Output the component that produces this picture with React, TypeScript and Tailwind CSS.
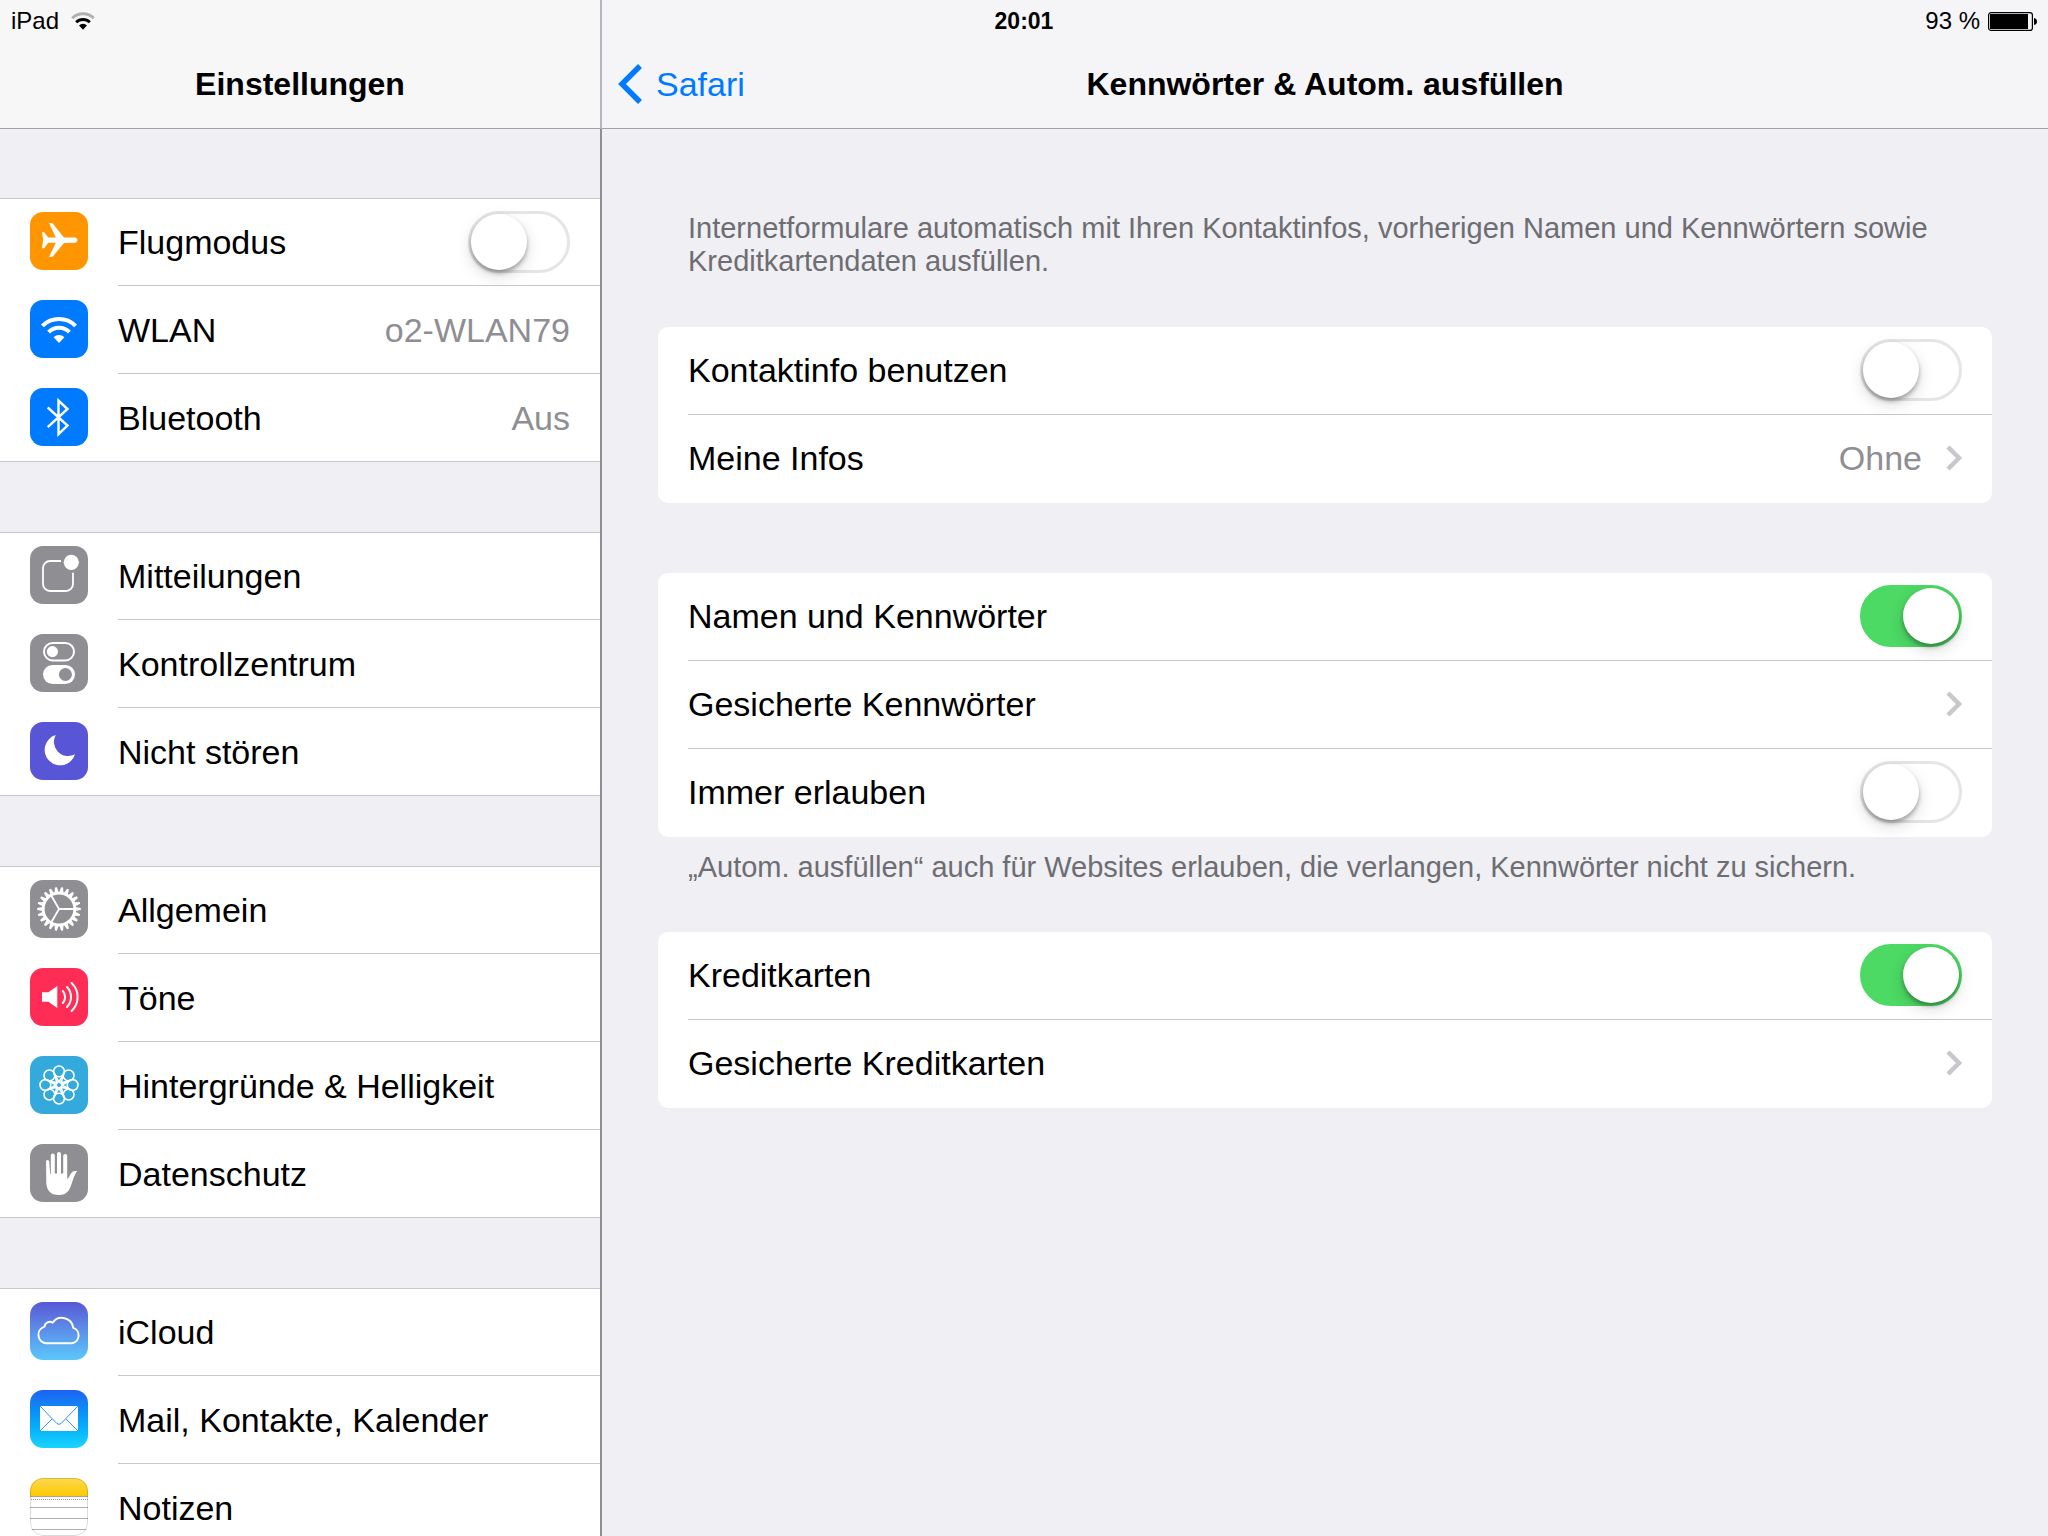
import type { ReactNode } from "react";

type SidebarItem = {
  label: string;
  icon: ReactNode;
  tile: string;
  value?: string;
  toggle?: boolean;
};

const gearTeeth = Array.from({ length: 22 }, (_, i) => (i * 360) / 22);
const petals = [0, 45, 90, 135, 180, 225, 270, 315];

const icons = {
  airplane: (
    <path
      fill="#fff"
      d="M12 20.3h2.2l4 5.2h7.600L19 11h3.400L34 25.400l11.700.1a2.900 2.900 0 0 1 0 5.300L34 30.900 22.400 45H19l6.800-14.200h-7.600L14.200 36.300H12l1.200-8.200z"
    />
  ),
  wifi: (
    <>
      <g fill="none" stroke="#fff" strokeWidth="4">
        <path d="M12.4 25.9a23.5 23.5 0 0 1 33.2 0" />
        <path d="M18.6 32.1a14.7 14.7 0 0 1 20.8 0" />
      </g>
      <path fill="#fff" d="M29 42.9l-5.400-5.600a7.600 7.600 0 0 1 10.800 0z" />
    </>
  ),
  bluetooth: (
    <path
      fill="none"
      stroke="#fff"
      strokeWidth="2.4"
      d="M17.700 19.500L37.500 37.500 28.500 46.200V12.600L37.500 21 17.700 39.200"
    />
  ),
  notifications: (
    <>
      <path
        fill="none"
        stroke="#fff"
        strokeWidth="1.8"
        d="M31 15H20a7 7 0 0 0-7 7v16a7 7 0 0 0 7 7h16a7 7 0 0 0 7-7V26.7"
      />
      <circle cx="41.3" cy="16.3" r="7.6" fill="#fff" />
    </>
  ),
  controls: (
    <>
      <rect x="14" y="9" width="30" height="17.4" rx="8.7" fill="none" stroke="#fff" strokeWidth="2" />
      <circle cx="22.4" cy="17.6" r="5.6" fill="#fff" />
      <rect x="13" y="31" width="32" height="19" rx="9.5" fill="#fff" />
      <circle cx="35.4" cy="40.5" r="6.5" fill="#8e8e93" />
    </>
  ),
  moon: (
    <path
      fill="#fff"
      d="M25.7 13A15.5 15.5 0 1 0 45 32.3 14.2 14.2 0 0 1 25.7 13z"
    />
  ),
  gear: (
    <>
      {gearTeeth.map((angle) => (
        <path
          key={angle}
          fill="#fff"
          d="M45.500 26.900l5.300 1.100v2l-5.300 1.100z"
          transform={`rotate(${angle} 29 29)`}
        />
      ))}
      <circle cx="29" cy="29" r="15.800" fill="none" stroke="#fff" strokeWidth="2.800" />
      <path
        fill="none"
        stroke="#fff"
        strokeWidth="1.8"
        d="M29 29h15M29 29l-7.5-13M29 29l-7.5 13"
      />
    </>
  ),
  sound: (
    <>
      <path fill="#fff" d="M12 24.2h6.4L27.3 18v22l-8.9-6.2H12z" />
      <g fill="none" stroke="#fff" strokeWidth="2" strokeLinecap="round">
        <path d="M32.8 23a9 9 0 0 1 0 12" />
        <path d="M37 19a14.5 14.5 0 0 1 0 20" />
        <path d="M41.6 15a19.3 19.3 0 0 1 0 28" />
      </g>
    </>
  ),
  flower: (
    <g fill="none" stroke="#fff" strokeWidth="1.6">
      {petals.map((angle) => (
        <g key={angle} transform={`rotate(${angle} 29 29)`}>
          <circle cx="29" cy="15.400" r="5.400" />
          <path d="M24 17.500l5 8.500 5-8.500" />
        </g>
      ))}
      <circle cx="29" cy="29" r="3.200" />
    </g>
  ),
  hand: (
    <path
      fill="#fff"
      d="M16 17.5a1.6 1.6 0 0 1 3.2 0l1 12.5h.6V11.6a2 2 0 0 1 4 0V29.5h2.2V10a2 2 0 0 1 4 0v19.5h2.2V12.1a2 2 0 0 1 4 0V35c1.4-1 2.3-3 3.4-5 1.3-2.4 3.6-3.6 6.6-2.9-2.4 3.2-3.6 7-5.2 11.3C40 45.6 37 51 29 51c-8.5 0-12.3-4.5-12.7-12z"
    />
  ),
  cloud: (
    <path
      fill="none"
      stroke="#fff"
      strokeWidth="2"
      strokeLinejoin="round"
      d="M16 41.2a8.5 8.5 0 0 1-1.5-16.6 5.4 5.4 0 0 1 8.2-4 11.4 11.4 0 0 1 20.500 5.300A7.900 7.900 0 0 1 42 41.200z"
    />
  ),
  mail: (
    <>
      <path fill="#fff" d="M10 16h38v25H10z" />
      <path
        fill="none"
        stroke="#2b93f7"
        strokeWidth="1"
        d="M10 16l16.800 17.400q2.200 2 4.400 0L48 16M10 41l12-12M48 41L36 29"
      />
    </>
  ),
  notes: (
    <>
      <defs>
        <linearGradient id="notes-top" x1="0" y1="0" x2="0" y2="1">
          <stop offset="0" stopColor="#fed94f" />
          <stop offset="1" stopColor="#fdc905" />
        </linearGradient>
      </defs>
      <path fill="url(#notes-top)" d="M0 0h58v18H0z" />
      <path stroke="#a9a594" strokeWidth="1" d="M0 18.5h58" />
      <path stroke="#9a9a9a" strokeWidth="1" strokeDasharray="1 1" d="M1 21.5h57" />
      <path stroke="#b0b0b0" strokeWidth="1" d="M0 29.5h58M0 40.5h58M0 51.5h58" />
      <rect x=".5" y=".5" width="57" height="57" rx="12.5" fill="none" stroke="#000" strokeOpacity=".14" />
    </>
  ),
};

const sidebarGroups: SidebarItem[][] = [
  [
    { label: "Flugmodus", icon: icons.airplane, tile: "bg-[#ff9500]", toggle: true },
    { label: "WLAN", icon: icons.wifi, tile: "bg-[#007aff]", value: "o2-WLAN79" },
    { label: "Bluetooth", icon: icons.bluetooth, tile: "bg-[#007aff]", value: "Aus" },
  ],
  [
    { label: "Mitteilungen", icon: icons.notifications, tile: "bg-[#8e8e93]" },
    { label: "Kontrollzentrum", icon: icons.controls, tile: "bg-[#8e8e93]" },
    { label: "Nicht stören", icon: icons.moon, tile: "bg-[#5856d6]" },
  ],
  [
    { label: "Allgemein", icon: icons.gear, tile: "bg-[#8e8e93]" },
    { label: "Töne", icon: icons.sound, tile: "bg-[#ff2d55]" },
    { label: "Hintergründe & Helligkeit", icon: icons.flower, tile: "bg-[#34aadc]" },
    { label: "Datenschutz", icon: icons.hand, tile: "bg-[#8e8e93]" },
  ],
  [
    { label: "iCloud", icon: icons.cloud, tile: "bg-linear-to-b from-[#5856d6] to-[#5ac8fa]" },
    { label: "Mail, Kontakte, Kalender", icon: icons.mail, tile: "bg-linear-to-b from-[#1d62f0] to-[#19d5fd]" },
    { label: "Notizen", icon: icons.notes, tile: "bg-white" },
  ],
];

function Toggle({ defaultChecked = false }: { defaultChecked?: boolean }) {
  return (
    <input
      type="checkbox"
      role="switch"
      defaultChecked={defaultChecked}
      className="h-[62px] w-[102px] shrink-0 appearance-none rounded-full border-3 border-[#e5e5e5] bg-white before:block before:size-14 before:rounded-full before:bg-white before:shadow-[0_3px_4px_rgba(0,0,0,0.3),0_6px_16px_rgba(0,0,0,0.15)] checked:border-[#4cd964] checked:bg-[#4cd964] checked:before:ml-10"
    />
  );
}

function Chevron() {
  return (
    <svg className="ml-6 h-[26px] w-4 shrink-0" viewBox="0 0 16 26" fill="none">
      <path d="M2 2l11 11L2 24" stroke="#c7c7cc" strokeWidth="4.5" />
    </svg>
  );
}

function SidebarRow({ item }: { item: SidebarItem }) {
  const content = (
    <>
      <span className={`mb-0.5 size-[58px] shrink-0 overflow-hidden rounded-[13px] ${item.tile}`}>
        <svg className="size-full" viewBox="0 0 58 58">
          {item.icon}
        </svg>
      </span>
      <span className="flex h-full flex-1 items-center justify-between border-b border-[#c8c7cc] pr-[30px] group-last:border-transparent">
        {item.label}
        {item.value && <span className="text-[#8e8e93]">{item.value}</span>}
        {item.toggle && <Toggle />}
      </span>
    </>
  );
  const rowClass = "flex h-[88px] items-center gap-[30px] pl-[30px]";

  return (
    <li className="group first:shadow-[inset_0_1px_0_#c8c7cc] last:shadow-[inset_0_-1px_0_#c8c7cc]">
      {item.toggle ? (
        <label className={rowClass}>{content}</label>
      ) : (
        <a href="#" className={rowClass}>
          {content}
        </a>
      )}
    </li>
  );
}

function Card({ children }: { children: ReactNode }) {
  return <ul className="rounded-[10px] bg-white pl-[30px]">{children}</ul>;
}

function SwitchRow({ label, checked }: { label: string; checked?: boolean }) {
  return (
    <li className="border-b border-[#c8c7cc] last:border-transparent">
      <label className="flex h-[87px] items-center justify-between pr-[30px] pb-0.5">
        {label}
        <Toggle defaultChecked={checked} />
      </label>
    </li>
  );
}

function LinkRow({ label, value }: { label: string; value?: string }) {
  return (
    <li className="border-b border-[#c8c7cc] last:border-transparent">
      <a href="#" className="flex h-[87px] items-center pr-[30px] pb-0.5">
        <span className="flex-1">{label}</span>
        {value && <span className="text-[#8e8e93]">{value}</span>}
        <Chevron />
      </a>
    </li>
  );
}

function StatusBar() {
  return (
    <div className="absolute inset-x-0 top-0 grid h-[42px] grid-cols-3 items-center px-[11px] text-2xl">
      <div className="flex items-center gap-3">
        iPad
        <svg className="h-[18px] w-6" viewBox="0 0 24 18" fill="none">
          <path d="M1.2 6.2a15.4 15.4 0 0 1 21.6 0" stroke="#b0b0b0" strokeWidth="3" />
          <path d="M5.2 10.3a9.7 9.7 0 0 1 13.6 0" stroke="#000" strokeWidth="3" />
          <path d="M12 17.8l-4-4.3a5.7 5.7 0 0 1 8 0z" fill="#000" />
        </svg>
      </div>
      <time className="text-center text-[23px] font-bold">20:01</time>
      <div className="flex items-center justify-end gap-2">
        93 %
        <svg className="h-[19px] w-[49px]" viewBox="0 0 49 19">
          <rect x=".6" y=".6" width="43.8" height="17.8" rx="2.5" fill="none" stroke="#000" strokeWidth="1.2" />
          <path d="M2 2h38v15H2z" />
          <path d="M46 6q3 .5 3 3.5T46 13z" />
        </svg>
      </div>
    </div>
  );
}

export default function App() {
  return (
    <div className="relative flex h-screen overflow-hidden bg-[#efeff4] font-['Liberation_Sans',Arial,sans-serif] text-[34px] leading-10 text-black">
      <aside className="w-[602px] shrink-0">
        <header className="flex h-[129px] items-center justify-center border-r-2 border-b border-r-[#b7b7bb] border-b-[#a3a3a9] bg-[#f7f7f7] pt-10">
          <h1 className="text-[32px] font-bold">Einstellungen</h1>
        </header>
        <nav className="flex flex-col gap-[70px] border-r-2 border-[#8e8e93] pt-[69px]">
          {sidebarGroups.map((group) => (
            <ul key={group[0].label} className="bg-white">
              {group.map((item) => (
                <SidebarRow key={item.label} item={item} />
              ))}
            </ul>
          ))}
        </nav>
      </aside>

      <main className="min-w-0 flex-1">
        <header className="grid h-[129px] grid-cols-[1fr_auto_1fr] items-center border-b border-[#a3a3a9] bg-[#f5f5f8] px-4 pt-10">
          <a href="#" className="flex items-center gap-[14px] text-[#007aff]">
            <svg className="h-10 w-6" viewBox="0 0 24 40" fill="none">
              <path d="M22 2L4 20l18 18" stroke="currentColor" strokeWidth="5.5" />
            </svg>
            Safari
          </a>
          <h2 className="text-[32px] font-bold">Kennwörter &amp; Autom. ausfüllen</h2>
        </header>

        <div className="px-14 pt-[83px]">
          <p className="mb-[49px] px-[30px] text-[29px] leading-[33px] text-[#6d6d72]">
            Internetformulare automatisch mit Ihren Kontaktinfos, vorherigen Namen und Kennwörtern sowie
            Kreditkartendaten ausfüllen.
          </p>
          <Card>
            <SwitchRow label="Kontaktinfo benutzen" />
            <LinkRow label="Meine Infos" value="Ohne" />
          </Card>
          <div className="h-[70px]" />
          <Card>
            <SwitchRow label="Namen und Kennwörter" checked />
            <LinkRow label="Gesicherte Kennwörter" />
            <SwitchRow label="Immer erlauben" />
          </Card>
          <p className="mt-[14px] mb-12 px-[30px] text-[29px] leading-[33px] text-[#6d6d72]">
            „Autom. ausfüllen“ auch für Websites erlauben, die verlangen, Kennwörter nicht zu sichern.
          </p>
          <Card>
            <SwitchRow label="Kreditkarten" checked />
            <LinkRow label="Gesicherte Kreditkarten" />
          </Card>
        </div>
      </main>

      <StatusBar />
    </div>
  );
}
